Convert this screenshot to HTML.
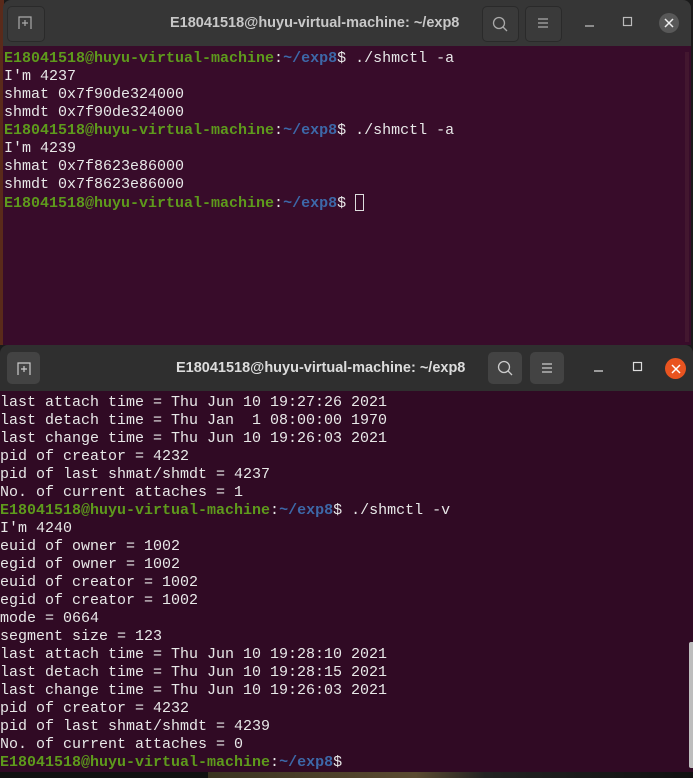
<!DOCTYPE html><html><head><style>
body{margin:0;width:693px;height:778px;background:#1a1a1a;overflow:hidden;position:relative;font-family:"Liberation Mono",monospace}
.win{position:absolute;overflow:hidden;border-radius:8px 8px 0 0}
.tb{position:absolute;left:0;right:0;top:0;height:46px}
.btn{position:absolute;border-radius:5px;width:34px;height:34px;top:6px}
.title{position:absolute;top:0;height:46px;font:bold 14.5px "Liberation Sans",sans-serif;line-height:46px;color:#dcdcdc;white-space:nowrap}
.body{position:absolute;left:0;right:0;top:46px;bottom:0}
pre{margin:0;font:15px "Liberation Mono",monospace;line-height:18px;color:#e8e8e8;position:absolute;left:1px}
.g{color:#5e9a1c;font-weight:bold}.b{color:#3d68a8;font-weight:bold}
svg{position:absolute}
</style></head><body>
<div style="position:absolute;left:0;top:0;width:4px;height:345px;background:#5a2a1a"></div>
<div class="win" style="left:3px;top:0;width:688px;height:345px;">
 <div class="tb" style="background:#363636">
  <div class="btn" style="left:4px;width:36px;border:1px solid #2a2a2a;background:#3a3a3a"></div>
  <svg style="left:15px;top:16px" width="14" height="14"><path d="M1 13V1h12v12M4 7h6M7 4v6" stroke="#aaa" fill="none" stroke-width="1.2"/></svg>
  <div class="title" style="left:167px;color:#c8c8c8">E18041518@huyu-virtual-machine: ~/exp8</div>
  <div class="btn" style="left:479px;width:35px;border:1px solid #2a2a2a;background:#3a3a3a"></div>
  <svg style="left:488px;top:15px" width="18" height="18"><circle cx="8" cy="8" r="5.5" stroke="#aaa" fill="none" stroke-width="1.3"/><path d="M12 12l4 4" stroke="#aaa" stroke-width="1.3"/></svg>
  <div class="btn" style="left:522px;width:35px;border:1px solid #2a2a2a;background:#3a3a3a"></div>
  <svg style="left:533px;top:16px" width="14" height="14"><path d="M2 3h10M2 7h10M2 11h10" stroke="#aaa" stroke-width="1.2"/></svg>
  <svg style="left:580px;top:18px" width="14" height="10"><path d="M2 8h9" stroke="#bbb" stroke-width="1.3"/></svg>
  <svg style="left:619px;top:16px" width="12" height="12"><rect x="1.5" y="1.5" width="8" height="8" stroke="#bbb" fill="none" stroke-width="1.2"/></svg>
  <div style="position:absolute;left:656px;top:13px;width:20px;height:20px;border-radius:50%;background:#585858"></div>
  <svg style="left:660px;top:17px" width="12" height="12"><path d="M2 2l8 8M10 2l-8 8" stroke="#eee" stroke-width="1.5"/></svg>
 </div>
 <div class="body" style="background:#380c2a">
  <div style="position:absolute;right:2px;top:6px;width:4px;height:290px;background:#43172f"></div>
  <pre style="top:4px"><span class="g">E18041518@huyu-virtual-machine</span>:<span class="b">~/exp8</span>$ ./shmctl -a
I'm 4237
shmat 0x7f90de324000
shmdt 0x7f90de324000
<span class="g">E18041518@huyu-virtual-machine</span>:<span class="b">~/exp8</span>$ ./shmctl -a
I'm 4239
shmat 0x7f8623e86000
shmdt 0x7f8623e86000
<span class="g">E18041518@huyu-virtual-machine</span>:<span class="b">~/exp8</span>$ <span style="display:inline-block;width:9px;height:17px;border:1px solid #ddd;box-sizing:border-box;vertical-align:-4px"></span></pre>
 </div>
</div>
<div class="win" style="left:0;top:345px;width:693px;height:427px;">
 <div class="tb" style="background:#2f2f2f">
  <div class="btn" style="left:7px;top:7px;width:33px;height:32px;background:#434343"></div>
  <svg style="left:17px;top:17px" width="14" height="14"><path d="M1 13V1h12v12M4 7h6M7 4v6" stroke="#ccc" fill="none" stroke-width="1.2"/></svg>
  <div class="title" style="left:176px">E18041518@huyu-virtual-machine: ~/exp8</div>
  <div class="btn" style="left:488px;top:7px;width:34px;height:32px;background:#434343"></div>
  <svg style="left:496px;top:14px" width="18" height="18"><circle cx="8" cy="8" r="5.5" stroke="#ccc" fill="none" stroke-width="1.3"/><path d="M12 12l4 4" stroke="#ccc" stroke-width="1.3"/></svg>
  <div class="btn" style="left:530px;top:7px;width:34px;height:32px;background:#434343"></div>
  <svg style="left:540px;top:16px" width="14" height="14"><path d="M2 3h10M2 7h10M2 11h10" stroke="#ccc" stroke-width="1.2"/></svg>
  <svg style="left:592px;top:18px" width="14" height="10"><path d="M2 8h9" stroke="#ddd" stroke-width="1.3"/></svg>
  <svg style="left:632px;top:16px" width="12" height="12"><rect x="1.5" y="1.5" width="8" height="8" stroke="#ddd" fill="none" stroke-width="1.2"/></svg>
  <div style="position:absolute;left:665px;top:13px;width:21px;height:21px;border-radius:50%;background:#e95420"></div>
  <svg style="left:670px;top:18px" width="12" height="12"><path d="M2 2l8 8M10 2l-8 8" stroke="#fff" stroke-width="1.5"/></svg>
 </div>
 <div class="body" style="background:#300a24">
  <div style="position:absolute;right:0;top:251px;width:4px;height:126px;background:#bdbdbd;border-radius:2px 0 0 2px"></div>
  <pre style="top:3px;left:0">last attach time = Thu Jun 10 19:27:26 2021
last detach time = Thu Jan  1 08:00:00 1970
last change time = Thu Jun 10 19:26:03 2021
pid of creator = 4232
pid of last shmat/shmdt = 4237
No. of current attaches = 1
<span class="g">E18041518@huyu-virtual-machine</span>:<span class="b">~/exp8</span>$ ./shmctl -v
I'm 4240
euid of owner = 1002
egid of owner = 1002
euid of creator = 1002
egid of creator = 1002
mode = 0664
segment size = 123
last attach time = Thu Jun 10 19:28:10 2021
last detach time = Thu Jun 10 19:28:15 2021
last change time = Thu Jun 10 19:26:03 2021
pid of creator = 4232
pid of last shmat/shmdt = 4239
No. of current attaches = 0
<span class="g">E18041518@huyu-virtual-machine</span>:<span class="b">~/exp8</span>$</pre>
 </div>
</div>
<div style="position:absolute;left:0;top:772px;width:693px;height:6px;background:linear-gradient(90deg,#111 0,#111 30%,#3a3320 30%,#5a4a30 60%,#222 70%,#111 100%)"></div>
</body></html>
